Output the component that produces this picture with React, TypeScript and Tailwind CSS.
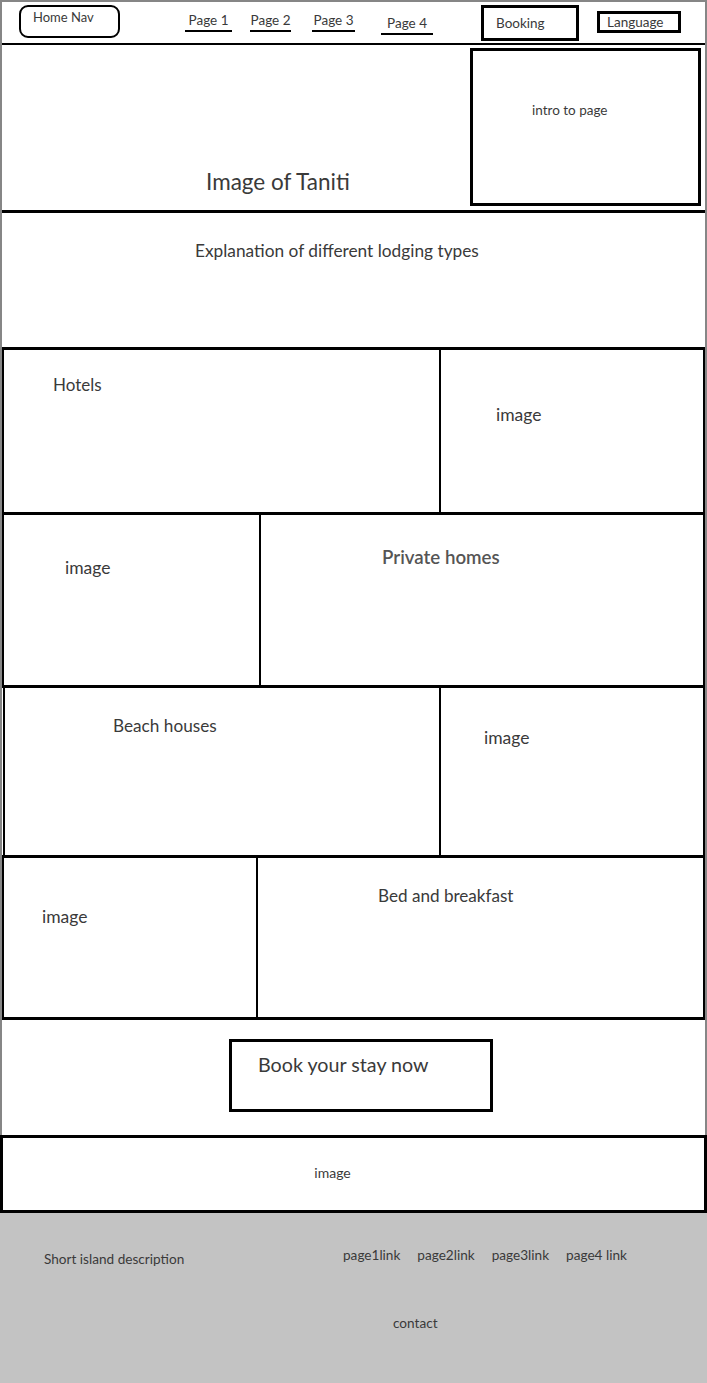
import React from 'react';

const navLinks = [
    { label: "Page 1", ml: "ml-[65px]", w: "w-[47px]", pt: "pt-[11px]" },
    { label: "Page 2", ml: "ml-[18px]", w: "w-[41px]", pt: "pt-[11px]" },
    { label: "Page 3", ml: "ml-[21px]", w: "w-[43px]", pt: "pt-[11px]" },
    { label: "Page 4", ml: "ml-[26px]", w: "w-[52px]", pt: "pt-[14px]" },
];

const footerLinks = ["page1link", "page2link", "page3link", "page4 link"];

export default function App() {
    return (
        <div className="w-[707px] min-h-[1383px] bg-white text-[#3a3a3a] font-['Lato','Liberation_Sans',sans-serif]">
            {/* Wireframe body */}
            <div className="border-t-2 border-x-2 border-[#868686]">
                {/* Header */}
                <header className="h-[43px] border-b-2 border-black flex items-start">
                    <div className="ml-[17px] mt-[3px] w-[101px] h-[33px] border-2 border-black rounded-[9px] pl-[12px] pt-[3px] text-[13px] leading-[15px]">
                        Home Nav
                    </div>
                    {navLinks.map((l) => (
                        <div key={l.label} className={`${l.ml} ${l.pt} flex flex-col items-center`}>
                            <span className="text-[13.5px] leading-[15px]">{l.label}</span>
                            <span className={`${l.w} h-[2px] bg-black mt-[2px]`}></span>
                        </div>
                    ))}
                    <div className="ml-[48px] mt-[3px] w-[98px] h-[36px] border-[3px] border-black pl-[12px] pt-[8px] text-[13.5px] leading-[15px]">
                        Booking
                    </div>
                    <div className="ml-[18px] mt-[9px] w-[84px] h-[22px] border-[3px] border-black pl-[7px] pt-[1px] text-[13.5px] leading-[15px]">
                        Language
                    </div>
                </header>

                {/* Hero */}
                <section className="h-[168px] border-b-[3px] border-black flex">
                    <div className="flex-1 pl-[204px] pt-[124px] text-[22.5px] leading-[26px]">
                        Image of Taniti
                    </div>
                    <div className="mt-[3px] mr-[4px] w-[231px] h-[158px] border-[3px] border-black pl-[59px] pt-[52px] text-[13.5px] leading-[15px]">
                        intro to page
                    </div>
                </section>

                {/* Explanation */}
                <section className="h-[137px] border-b-[3px] border-black pl-[193px] pt-[28px] text-[17.3px] leading-[20px]">
                    Explanation of different lodging types
                </section>

                {/* Hotels */}
                <section className="h-[165px] border-b-[3px] border-black flex">
                    <div className="w-[439px] border-x-2 border-black pl-[49px] pt-[25px] text-[17px] leading-[19px]">Hotels</div>
                    <div className="flex-1 border-r-2 border-black pl-[55px] pt-[55px] text-[17.5px] leading-[19px]">image</div>
                </section>

                {/* Private homes */}
                <section className="h-[173px] border-b-[3px] border-black flex">
                    <div className="w-[259px] border-x-2 border-black pl-[61px] pt-[43px] text-[17.5px] leading-[19px]">image</div>
                    <div className="flex-1 border-r-2 border-black pl-[121px] pt-[32px] text-[18.7px] leading-[21px] font-semibold text-[#555]">Private homes</div>
                </section>

                {/* Beach houses */}
                <section className="h-[170px] border-b-[3px] border-black flex">
                    <div className="ml-[1px] w-[438px] border-x-2 border-black pl-[108px] pt-[28px] text-[17.2px] leading-[19px]">Beach houses</div>
                    <div className="flex-1 border-r-2 border-black pl-[43px] pt-[40px] text-[17.5px] leading-[19px]">image</div>
                </section>

                {/* Bed and breakfast */}
                <section className="h-[162px] border-b-[3px] border-black flex">
                    <div className="w-[256px] border-x-2 border-black pl-[38px] pt-[49px] text-[17.5px] leading-[19px]">image</div>
                    <div className="flex-1 border-r-2 border-black pl-[120px] pt-[28px] text-[17.1px] leading-[19px]">Bed and breakfast</div>
                </section>

                {/* CTA */}
                <section className="h-[115px] flex pl-[227px] pt-[19px]">
                    <div className="w-[264px] h-[73px] border-[3px] border-black pl-[26px] pt-[12px] text-[19.7px] leading-[22px]">
                        Book your stay now
                    </div>
                </section>
            </div>

            {/* Image strip */}
            <section className="h-[78px] border-[3px] border-black flex items-center justify-center pr-[42px] pb-[4px] text-[14px]">
                image
            </section>

            {/* Footer */}
            <footer className="h-[171px] bg-[#c3c3c3] text-[13.6px] leading-[16px]">
                <div className="flex pt-[34px]">
                    <div className="pl-[44px] pt-[4px] w-[343px]">Short island description</div>
                    <div className="flex gap-[17px]">
                        {footerLinks.map((l) => (
                            <span key={l}>{l}</span>
                        ))}
                    </div>
                </div>
                <div className="pl-[393px] pt-[48px]">contact</div>
            </footer>
        </div>
    );
}
